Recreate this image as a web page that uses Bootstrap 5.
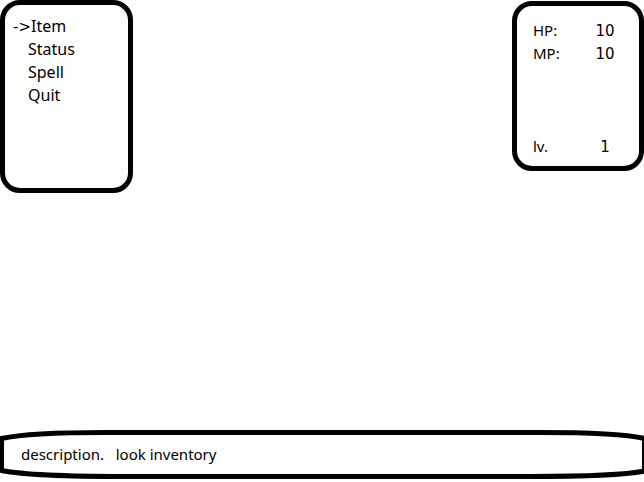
<!DOCTYPE html>
<html lang="en">
<head>
<meta charset="utf-8">
<meta name="viewport" content="width=device-width, initial-scale=1">
<title>Game menu</title>
<link href="https://cdn.jsdelivr.net/npm/bootstrap@5.3.0/dist/css/bootstrap.min.css" rel="stylesheet">
<style>
body { font-family: "Noto Sans", sans-serif; font-size: 15px; line-height: 23px; color: #000; background: #fff; }
.frame { border: 5px solid #000; border-radius: 20px; background: #fff; }
.menu-frame { width: 133px; min-height: 193px; padding: 10px 8px; }
.stats-frame { width: 132px; min-height: 170px; margin-top: 1px; padding: 13px 16px 8px; }
.menu-item { font: inherit; font-size: 16px; color: inherit; line-height: 23px; padding-left: 15px; }
.menu-item.selected { padding-left: 0; }
.arrow { font-family: "DejaVu Sans", sans-serif; font-size: 15px; line-height: 1; }
.stat-row { height: 23px; }
.stat-value { font-family: "DejaVu Sans", sans-serif; font-size: 15px; width: 20px; margin-right: 8px; text-align: center; }
.text-frame { height: 49px; margin-bottom: 3px; }
.text-frame > * { grid-area: 1 / 1; }
.text-frame path { fill: #fff; stroke: #000; stroke-width: 5px; vector-effect: non-scaling-stroke; }
.message { padding: 13px 21px; white-space: pre; }
</style>
</head>
<body>
<div class="d-flex flex-column justify-content-between min-vh-100 overflow-hidden">
  <div class="d-flex justify-content-between align-items-start">
    <nav class="frame menu-frame d-flex flex-column align-items-start" aria-label="Game menu">
      <button type="button" class="menu-item selected border-0 bg-transparent py-0 pe-0"><span class="arrow">-&gt;</span>Item</button>
      <button type="button" class="menu-item border-0 bg-transparent py-0 pe-0">Status</button>
      <button type="button" class="menu-item border-0 bg-transparent py-0 pe-0">Spell</button>
      <button type="button" class="menu-item border-0 bg-transparent py-0 pe-0">Quit</button>
    </nav>
    <section class="frame stats-frame d-flex flex-column" aria-label="Stats">
      <div class="stat-row d-flex justify-content-between align-items-baseline"><span>HP:</span><span class="stat-value">10</span></div>
      <div class="stat-row d-flex justify-content-between align-items-baseline"><span>MP:</span><span class="stat-value">10</span></div>
      <div class="stat-row d-flex justify-content-between align-items-baseline mt-auto"><span>lv.</span><span class="stat-value">1</span></div>
    </section>
  </div>
  <div class="text-frame d-grid">
    <svg class="w-100 h-100" viewBox="0 0 644 49" preserveAspectRatio="none" aria-hidden="true">
      <path d="M1.5 8.5C20 4.5 60 2.5 105 2.5H540C585 2.5 625 4 644.5 8.5V41C625 45 585 46.5 530 46.5H125C70 46.5 25 45 1.5 40.5Z"/>
    </svg>
    <p class="message mb-0">description.   look inventory</p>
  </div>
</div>
<script src="https://cdn.jsdelivr.net/npm/bootstrap@5.3.0/dist/js/bootstrap.bundle.min.js"></script>
</body>
</html>
